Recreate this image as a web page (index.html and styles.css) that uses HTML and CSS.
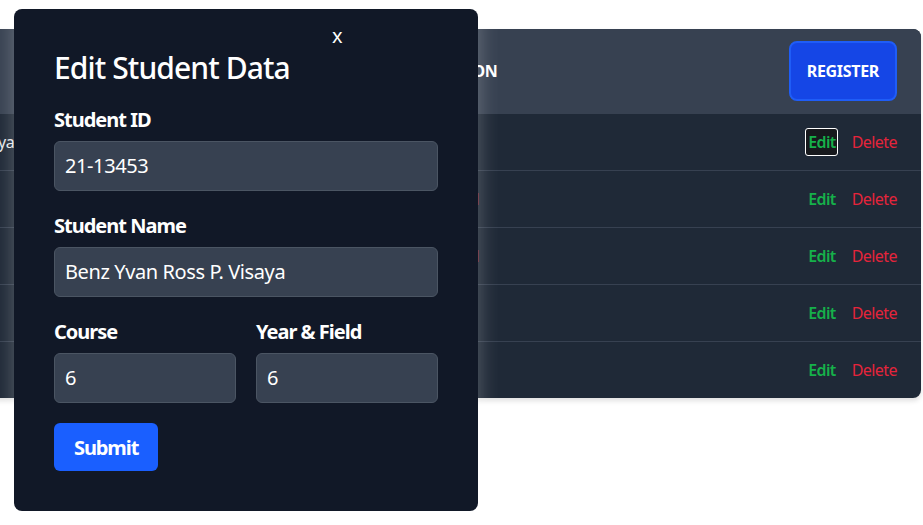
FILE: index.html
```html
<!DOCTYPE html>
<html lang="en">
<head>
<meta charset="utf-8">
<title>Students</title>
<link rel="stylesheet" href="styles.css">
</head>
<body>
  <div class="card">
    <div class="row head">
      <div class="c c1">Student ID</div>
      <div class="c c2">Student Name</div>
      <div class="c c3">Course</div>
      <div class="c c4">Year &amp; Section</div>
      <div class="c c5"><button class="register">REGISTER</button></div>
    </div>
    <div class="row">
      <div class="c c1">21-13453</div>
      <div class="c c2 name">Benz Yvan Ross P. Visaya</div>
      <div class="c c3">6</div>
      <div class="c c4">6</div>
      <div class="c c5"><button class="edit focus">Edit</button><button class="del">Delete</button></div>
    </div>
    <div class="row">
      <div class="c c1">21-10021</div>
      <div class="c c2">Juan Dela Cruz</div>
      <div class="c c3">4</div>
      <div class="c c4 red">Not Enrolled</div>
      <div class="c c5"><button class="edit">Edit</button><button class="del">Delete</button></div>
    </div>
    <div class="row">
      <div class="c c1">21-10244</div>
      <div class="c c2">Maria Santos</div>
      <div class="c c3">2</div>
      <div class="c c4 red">Not Enrolled</div>
      <div class="c c5"><button class="edit">Edit</button><button class="del">Delete</button></div>
    </div>
    <div class="row">
      <div class="c c1">21-11873</div>
      <div class="c c2">Ana Reyes</div>
      <div class="c c3">3</div>
      <div class="c c4">1</div>
      <div class="c c5"><button class="edit">Edit</button><button class="del">Delete</button></div>
    </div>
    <div class="row">
      <div class="c c1">21-12290</div>
      <div class="c c2">Mark Garcia</div>
      <div class="c c3">5</div>
      <div class="c c4">2</div>
      <div class="c c5"><button class="edit">Edit</button><button class="del">Delete</button></div>
    </div>
  </div>

  <div class="modal">
    <button class="close">x</button>
    <h2 class="title">Edit Student Data</h2>
    <div class="field">
      <label class="label">Student ID</label>
      <div class="input">21-13453</div>
    </div>
    <div class="field">
      <label class="label">Student Name</label>
      <div class="input">Benz Yvan Ross P. Visaya</div>
    </div>
    <div class="field two">
      <div class="sub">
        <label class="label">Course</label>
        <div class="input">6</div>
      </div>
      <div class="sub">
        <label class="label">Year &amp; Field</label>
        <div class="input">6</div>
      </div>
    </div>
    <button class="submit">Submit</button>
  </div>
</body>
</html>
```
FILE: styles.css
```css
* { box-sizing: border-box; }
html, body { margin: 0; padding: 0; }
body {
  background: #ffffff;
  font-family: "Noto Sans", "Open Sans", sans-serif;
  letter-spacing: -0.025em;
  overflow: hidden;
  height: 525px;
  position: relative;
}
button { font-family: inherit; letter-spacing: inherit; cursor: pointer; }

.card {
  margin-top: 29px;
  margin-left: -340px;
  width: 1261px;
  background: #1f2937;
  border-radius: 8px;
  overflow: hidden;
  box-shadow: 0 3px 5px rgba(0,0,0,0.12);
}
.row {
  display: flex;
  align-items: center;
  height: 57px;
  border-top: 1px solid #374151;
  color: #e5e7eb;
  font-size: 16px;
}
.row.head {
  height: 84px;
  border-top: none;
  background: #374151;
  color: #ffffff;
  font-size: 16px;
  font-weight: 700;
  letter-spacing: -0.02em;
  text-transform: uppercase;
}
.c { padding: 0 24px; white-space: nowrap; }
.c1 { width: 156px; }
.c2 { width: 234px; }
.c3 { width: 308px; }
.c4 { flex: 1; padding-left: 32px; }
.c5 { display: flex; align-items: center; gap: 14px; }
.red { color: #dc2626; }
.head .c4 { padding-left: 14px; }

.register {
  height: 60px;
  padding: 0 16px;
  background: #1546e6;
  border: 2px solid #1f5df7;
  border-radius: 8px;
  color: #ffffff;
  font-size: 16px;
  font-weight: 700;
}
.edit, .del {
  background: none;
  border: 1px solid transparent;
  border-radius: 3px;
  padding: 1px 1px 1px 2px;
  font-size: 16px;
  line-height: 24px;
}
.edit { color: #16b04a; font-weight: 600; letter-spacing: -0.04em; }
.edit.focus { border-color: #ffffff; background: #17191d; }
.del { color: #e5243b; font-weight: 400; padding: 0; border: none; letter-spacing: -0.035em; }

.modal {
  position: absolute;
  left: 14px;
  top: 9px;
  width: 464px;
  height: 502px;
  background: #111827;
  border-radius: 8px;
  padding: 41px 40px;
  box-shadow: 0 0 22px rgba(255,255,255,0.28);
  color: #ffffff;
}
.close {
  position: absolute;
  top: 13px;
  left: 314px;
  background: none;
  border: none;
  color: #ffffff;
  font-size: 20px;
  line-height: 28px;
  padding: 0 4px;
}
.title {
  margin: 0 0 20px;
  font-size: 30px;
  line-height: 36px;
  font-weight: 500;
  letter-spacing: -0.03em;
}
.field { margin-bottom: 21px; }
.two { display: flex; gap: 20px; margin-bottom: 20px; }
.sub { flex: 1; }
.label {
  display: block;
  font-size: 20px;
  line-height: 28px;
  font-weight: 700;
  letter-spacing: -0.05em;
  margin-bottom: 7px;
}
.input {
  height: 50px;
  padding: 10px;
  background: #374151;
  border: 1px solid #4b5563;
  border-radius: 6px;
  font-size: 20px;
  line-height: 28px;
  color: #ffffff;
}
.submit {
  height: 48px;
  padding: 0 20px;
  background: #1a5fff;
  border: none;
  border-radius: 6px;
  color: #ffffff;
  font-size: 20px;
  font-weight: 700;
  letter-spacing: -0.055em;
}
```
